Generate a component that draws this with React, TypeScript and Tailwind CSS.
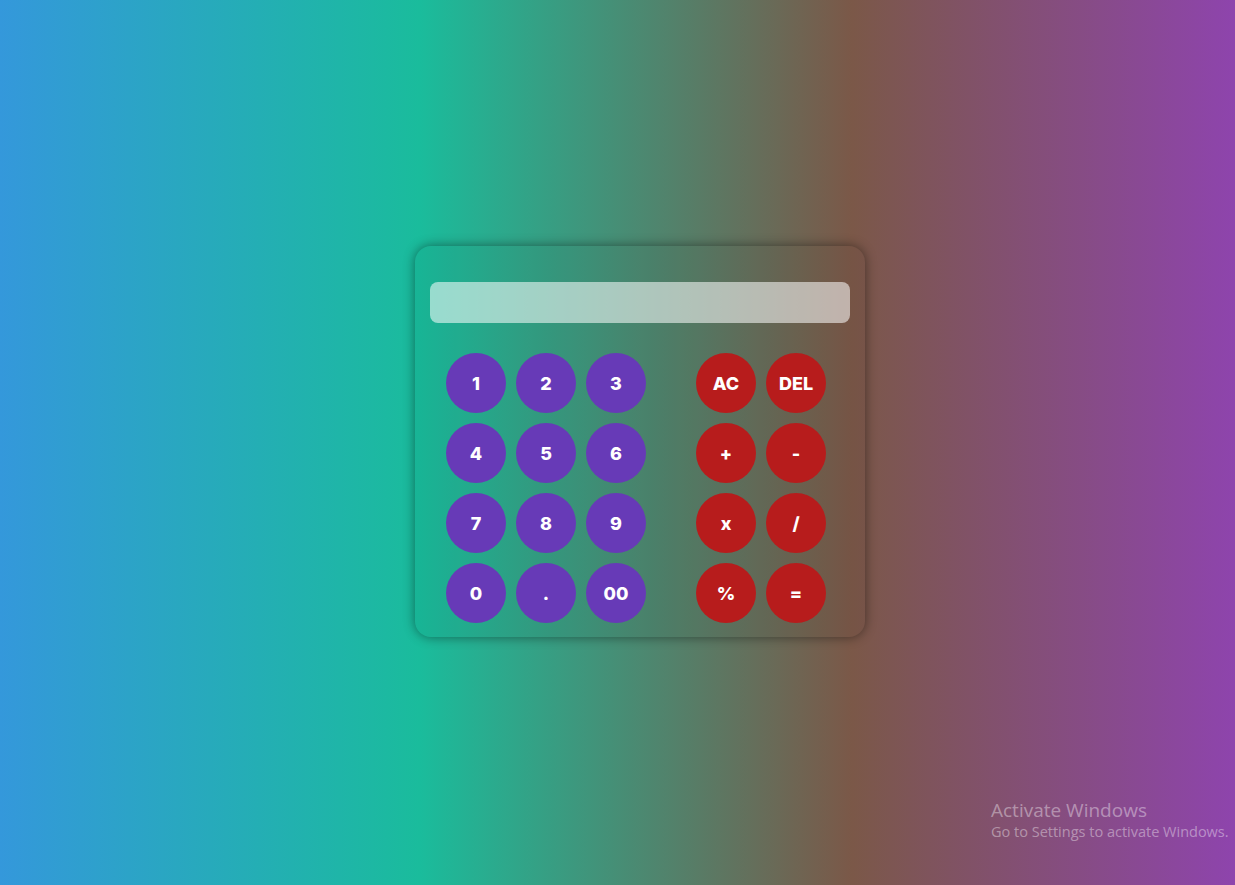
const NUM_KEYS = ['1', '2', '3', '4', '5', '6', '7', '8', '9', '0', '.', '00'];
const OP_KEYS = ['AC', 'DEL', '+', '-', 'x', '/', '%', '='];

const Key = ({ label, tone }: { label: string; tone: 'num' | 'op' }) => (
  <button
    className={
      'w-[60px] h-[60px] rounded-full text-white text-[18px] font-extrabold flex items-center justify-center ' +
      (tone === 'num' ? 'bg-[#673ab7]' : 'bg-[#b71c1c]')
    }
  >
    {label}
  </button>
);

export default function App() {
  return (
    <div
      className="relative w-full h-[885px] overflow-hidden flex items-center justify-center pl-[45px] pb-[2px] bg-[linear-gradient(to_right,#3498db_0%,#1abc9c_34%,#7b5848_69%,#8e44ad_100%)]"
      style={{ fontFamily: 'Inter, "Noto Sans", sans-serif' }}
    >
      {/* calculator */}
      <div className="w-[450px] rounded-2xl bg-black/[0.04] shadow-[0_0_12px_rgba(0,0,0,0.45)] pt-[36px] pb-[14px] px-[15px]">
        <div className="h-[41px] rounded-lg bg-white/55" />
        <div className="flex gap-[50px] mt-[30px] pl-4">
          <div className="grid grid-cols-3 gap-[10px]">
            {NUM_KEYS.map((k) => (
              <Key key={k} label={k} tone="num" />
            ))}
          </div>
          <div className="grid grid-cols-2 gap-[10px]">
            {OP_KEYS.map((k) => (
              <Key key={k} label={k} tone="op" />
            ))}
          </div>
        </div>
      </div>

      {/* windows watermark */}
      <div
        className="absolute left-[991px] top-[799px] text-white/40 leading-tight"
        style={{ fontFamily: '"Open Sans", "Noto Sans", sans-serif' }}
      >
        <div className="text-[19px]">Activate Windows</div>
        <div className="text-[14.5px]">Go to Settings to activate Windows.</div>
      </div>
    </div>
  );
}
